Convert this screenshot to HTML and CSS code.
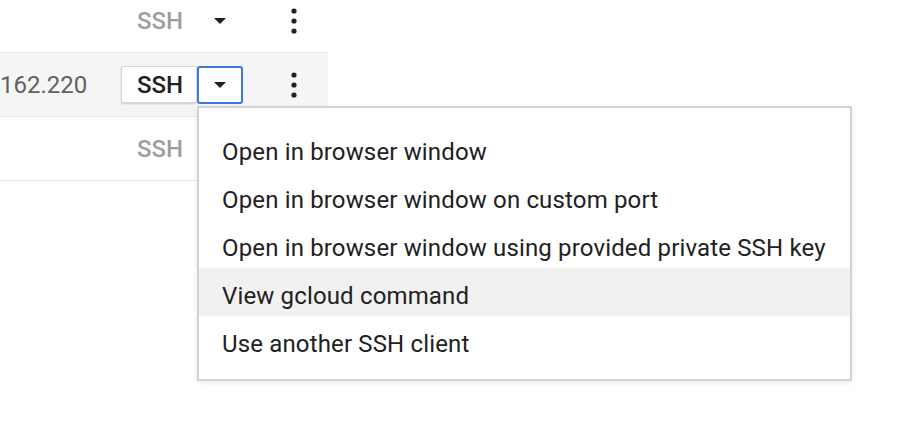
FILE: index.html
```html
<!DOCTYPE html>
<html>
<head>
<meta charset="utf-8">
<link rel="stylesheet" href="styles.css">
</head>
<body>
<div class="table">
  <div class="row">
    <div class="ip"></div>
    <div class="connect">
      <span class="ssh disabled">SSH</span>
      <span class="drop plain"><svg width="12" height="6" viewBox="0 0 12 6"><polygon points="0,0 12,0 6,6" fill="#212121"/></svg></span>
    </div>
    <div class="more"><svg width="6" height="26" viewBox="0 0 6 26"><circle cx="3" cy="3" r="2.6" fill="#212121"/><circle cx="3" cy="13" r="2.6" fill="#212121"/><circle cx="3" cy="23" r="2.6" fill="#212121"/></svg></div>
  </div>
  <div class="row active">
    <div class="ip">162.220</div>
    <div class="connect">
      <span class="ssh button">SSH</span>
      <span class="drop focused"><svg width="12" height="6" viewBox="0 0 12 6"><polygon points="0,0 12,0 6,6" fill="#212121"/></svg></span>
    </div>
    <div class="more"><svg width="6" height="26" viewBox="0 0 6 26"><circle cx="3" cy="3" r="2.6" fill="#212121"/><circle cx="3" cy="13" r="2.6" fill="#212121"/><circle cx="3" cy="23" r="2.6" fill="#212121"/></svg></div>
  </div>
  <div class="row">
    <div class="ip"></div>
    <div class="connect">
      <span class="ssh disabled">SSH</span>
    </div>
  </div>
</div>
<div class="menu">
  <div class="item">Open in browser window</div>
  <div class="item">Open in browser window on custom port</div>
  <div class="item">Open in browser window using provided private SSH key</div>
  <div class="item hover">View gcloud command</div>
  <div class="item">Use another SSH client</div>
</div>
</body>
</html>
```
FILE: styles.css
```css
html, body {
  margin: 0;
  padding: 0;
  background: #ffffff;
  font-family: Roboto, "Liberation Sans", Arial, sans-serif;
  color: #212121;
}
.table {
  width: 328px;
  margin-top: -11px;
}
.row {
  height: 63px;
  display: flex;
  align-items: center;
  border-bottom: 1px solid #e6e6e6;
}
.row.active {
  background: #f5f5f5;
}
.ip {
  width: 85px;
  text-align: right;
  font-size: 24px;
  color: #616161;
  white-space: nowrap;
}
.connect {
  display: flex;
  align-items: center;
  margin-left: 36px;
  width: 122px;
}
.ssh {
  box-sizing: border-box;
  height: 37px;
  width: 76px;
  padding: 0 15px;
  display: flex;
  align-items: center;
  font-size: 24px;
  font-weight: 500;
  border: 1px solid transparent;
  border-radius: 2px;
}
.ssh.disabled {
  color: #9e9e9e;
}
.ssh.button {
  background: #ffffff;
  color: #212121;
  border-color: #d8d8d8;
  box-shadow: 0 1px 2px rgba(0,0,0,0.18);
}
.drop {
  box-sizing: border-box;
  width: 46px;
  height: 38px;
  display: flex;
  align-items: center;
  justify-content: center;
  border: 2px solid transparent;
  border-radius: 3px;
}
.drop.focused {
  background: #ffffff;
  border-color: #3b78e7;
  margin-top: 1px;
}
.more {
  margin-left: 48px;
  display: flex;
  align-items: center;
}
.menu {
  position: absolute;
  left: 197px;
  top: 106px;
  width: 655px;
  box-sizing: border-box;
  background: #ffffff;
  border: 2px solid #d2d2d2;
  box-shadow: 0 2px 6px rgba(0,0,0,0.08);
  padding: 16px 0 15px;
}
.item {
  box-sizing: border-box;
  height: 48px;
  line-height: 40px;
  padding-top: 8px;
  padding-left: 23px;
  font-size: 24px;
  letter-spacing: 0.15px;
  color: #212121;
  white-space: nowrap;
}
.item.hover {
  background: #f1f1f1;
}
```
